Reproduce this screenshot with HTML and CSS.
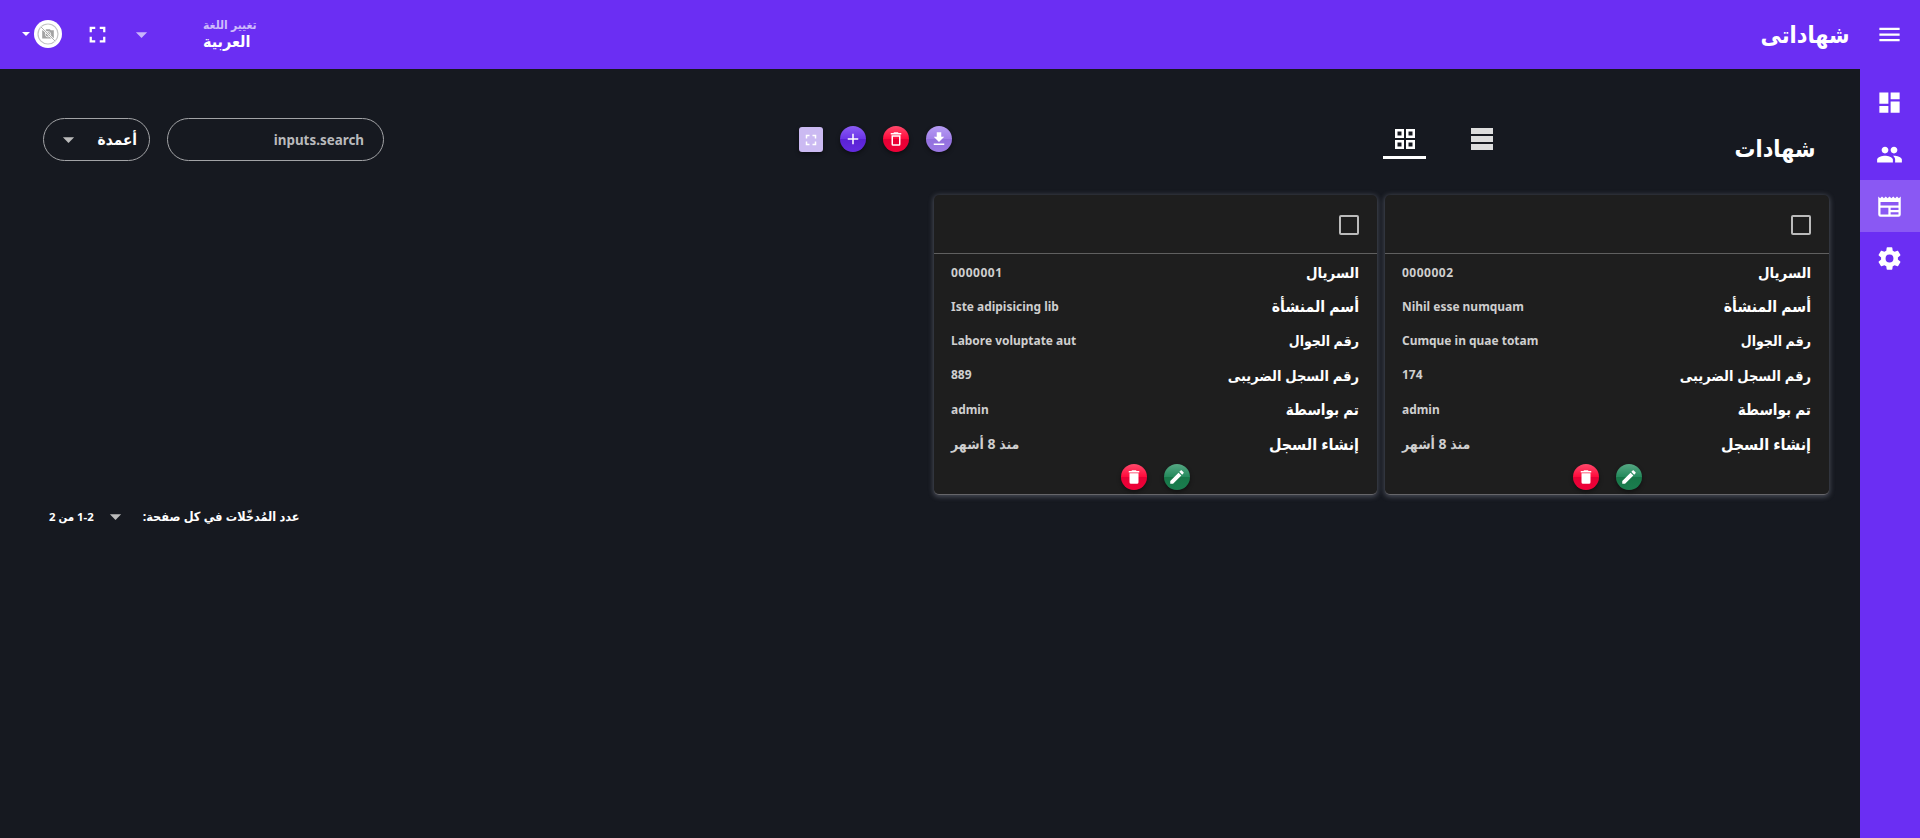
FILE: index.html
```html
<!DOCTYPE html>
<html lang="ar" dir="rtl">
<head>
<meta charset="utf-8">
<title>شهاداتى</title>
<link rel="stylesheet" href="styles.css">
</head>
<body>
<svg class="defs" aria-hidden="true">
  <symbol id="menu" viewBox="0 0 24 24"><path d="M3 6h18v2H3V6m0 5h18v2H3v-2m0 5h18v2H3v-2z"/></symbol>
  <symbol id="dashboard" viewBox="0 0 24 24"><path d="M13 3v6h8V3m-8 18h8V11h-8M3 21h8v-6H3m0-2h8V3H3v10z"/></symbol>
  <symbol id="users" viewBox="0 0 24 24"><path d="M16 11c1.660 0 3-1.340 3-3s-1.340-3-3-3-3 1.340-3 3 1.340 3 3 3m-8 0c1.660 0 3-1.340 3-3S9.660 5 8 5 5 6.340 5 8s1.340 3 3 3m0 2c-2.330 0-7 1.170-7 3.500V19h14v-2.500C15 14.170 10.330 13 8 13m8 0c-.29 0-.62.02-.97.05C16.190 13.890 17 15.020 17 16.500V19h6v-2.500c0-2.330-4.670-3.500-7-3.500z"/></symbol>
  <symbol id="news" viewBox="0 0 24 24"><path d="M20 11H4V8h16m0 7h-7v-2h7m0 6h-7v-2h7m-9 2H4v-6h7m9.330-8.330L18.670 3 17 4.670 15.330 3l-1.660 1.670L12 3l-1.670 1.670L8.670 3 7 4.670 5.330 3 3.670 4.670 2 3v16a2 2 0 0 0 2 2h16a2 2 0 0 0 2-2V3z"/></symbol>
  <symbol id="cog" viewBox="0 0 24 24"><path d="M12 15.500A3.500 3.500 0 0 1 8.500 12 3.500 3.500 0 0 1 12 8.500a3.500 3.500 0 0 1 3.500 3.500 3.500 3.500 0 0 1-3.500 3.500m7.430-2.530c.04-.32.07-.64.07-.97s-.03-.66-.07-1l2.110-1.630c.19-.15.24-.42.12-.64l-2-3.460c-.12-.22-.39-.31-.61-.22l-2.490 1c-.52-.39-1.060-.73-1.690-.98l-.37-2.650A.506.506 0 0 0 14 2h-4c-.25 0-.46.18-.5.42l-.37 2.650c-.63.25-1.170.59-1.690.98l-2.490-1c-.22-.09-.49 0-.61.22l-2 3.460c-.13.22-.07.49.12.64L4.570 11c-.04.34-.07.67-.07 1s.03.65.07.97l-2.110 1.660c-.19.15-.25.42-.12.64l2 3.460c.12.22.39.3.61.22l2.490-1.010c.52.4 1.060.74 1.690.99l.37 2.650c.04.24.25.42.5.42h4c.25 0 .46-.18.5-.42l.37-2.650c.63-.26 1.170-.59 1.690-.99l2.490 1.010c.22.08.49 0 .61-.22l2-3.460c.12-.22.07-.49-.12-.64l-2.110-1.660z"/></symbol>
  <symbol id="fullscreen" viewBox="0 0 24 24"><path d="M5 5h5v2H7v3H5V5m9 0h5v5h-2V7h-3V5m3 9h2v5h-5v-2h3v-3m-7 3v2H5v-5h2v3h3z"/></symbol>
  <symbol id="caret" viewBox="0 0 24 24"><path d="M7 10l5 5 5-5H7z"/></symbol>
  <symbol id="plus" viewBox="0 0 24 24"><path d="M19 13h-6v6h-2v-6H5v-2h6V5h2v6h6v2z"/></symbol>
  <symbol id="trash-o" viewBox="0 0 24 24"><path d="M6 19a2 2 0 0 0 2 2h8a2 2 0 0 0 2-2V7H6v12M8 9h8v10H8V9m7.500-5l-1-1h-5l-1 1H5v2h14V4h-3.500z"/></symbol>
  <symbol id="trash" viewBox="0 0 24 24"><path d="M19 4h-3.500l-1-1h-5l-1 1H5v2h14M6 19a2 2 0 0 0 2 2h8a2 2 0 0 0 2-2V7H6v12z"/></symbol>
  <symbol id="download" viewBox="0 0 24 24"><path d="M5 20h14v-2H5m14-9h-4V3H9v6H5l7 7 7-7z"/></symbol>
  <symbol id="pencil" viewBox="0 0 24 24"><path d="M20.710 7.040c.39-.39.39-1.040 0-1.410l-2.340-2.340c-.37-.39-1.020-.39-1.410 0l-1.840 1.830 3.750 3.750M3 17.250V21h3.750L17.810 9.930l-3.750-3.750L3 17.250z"/></symbol>
  <symbol id="grid" viewBox="0 0 20 20"><path fill-rule="evenodd" d="M0 0h9v9H0zm2.500 2.500v4h4v-4zM11 0h9v9h-9zm2.500 2.500v4h4v-4zM0 11h9v9H0zm2.500 2.500v4h4v-4zM11 11h9v9h-9zm2.500 2.500v4h4v-4z"/></symbol>
  <symbol id="rows" viewBox="0 0 22 22"><path d="M0 0h22v6H0zm0 8h22v6H0zm0 8h22v6H0z"/></symbol>
</svg>

<header class="topbar">
  <div class="brand">
    <svg class="icon"><use href="#menu"/></svg>
    <h1 class="brand-title">شهاداتى</h1>
  </div>
  <div class="top-actions">
    <div class="language">
      <div class="language-text">
        <span class="language-label">تغيير اللغة</span>
        <span class="language-value">العربية</span>
      </div>
      <svg class="icon caret"><use href="#caret"/></svg>
    </div>
    <svg class="icon full"><use href="#fullscreen"/></svg>
    <div class="profile">
      <svg class="avatar" viewBox="0 0 28 28">
        <circle cx="14" cy="14" r="14" fill="#fff"/>
        <circle cx="14" cy="14" r="10" fill="none" stroke="#c4c4c4" stroke-width="1.200"/>
        <path d="M8.200 10.300h3l1-1h3.600l1 1h3v8.200H8.200z" fill="#a2a2a2"/>
        <circle cx="14" cy="14.300" r="2.700" fill="#999" stroke="#eee" stroke-width="1"/>
        <path d="M7 7l14 14" stroke="#fff" stroke-width="2"/>
        <path d="M7 7l14 14" stroke="#b0b0b0" stroke-width="1"/>
      </svg>
      <i class="mini-caret"></i>
    </div>
  </div>
</header>

<div class="shell">
  <nav class="sidebar">
    <a class="nav-item"><svg class="icon"><use href="#dashboard"/></svg></a>
    <a class="nav-item"><svg class="icon"><use href="#users"/></svg></a>
    <a class="nav-item active"><svg class="icon"><use href="#news"/></svg></a>
    <a class="nav-item"><svg class="icon"><use href="#cog"/></svg></a>
  </nav>
  <main class="content">
    <section class="toolbar">
      <h2 class="page-title">شهادات</h2>
      <div class="tabs">
        <span class="tab"><svg class="rows-icon"><use href="#rows"/></svg></span>
        <span class="tab selected"><svg class="grid-icon"><use href="#grid"/></svg></span>
      </div>
      <div class="tools">
        <span class="btn lilac"><svg><use href="#download"/></svg></span>
        <span class="btn red"><svg><use href="#trash-o"/></svg></span>
        <span class="btn violet"><svg><use href="#plus"/></svg></span>
        <span class="btn square"><svg><use href="#fullscreen"/></svg></span>
      </div>
      <div class="filters">
        <div class="field search"><span>inputs.search</span></div>
        <div class="field columns"><span>أعمدة</span><svg class="icon caret"><use href="#caret"/></svg></div>
      </div>
    </section>

    <section class="cards">
      <article class="card">
        <div class="card-head"><i class="checkbox"></i></div>
        <dl class="rows">
          <div class="row serial"><dt>السريال</dt><dd>0000002</dd></div>
          <div class="row facility"><dt>أسم المنشأة</dt><dd class="latin">Nihil esse numquam</dd></div>
          <div class="row phone"><dt>رقم الجوال</dt><dd class="latin">Cumque in quae totam</dd></div>
          <div class="row tax"><dt>رقم السجل الضريبى</dt><dd>174</dd></div>
          <div class="row author"><dt>تم بواسطة</dt><dd class="latin">admin</dd></div>
          <div class="row created"><dt>إنشاء السجل</dt><dd>منذ 8 أشهر</dd></div>
        </dl>
        <div class="card-actions">
          <span class="btn green"><svg><use href="#pencil"/></svg></span>
          <span class="btn red"><svg><use href="#trash"/></svg></span>
        </div>
      </article>
      <article class="card">
        <div class="card-head"><i class="checkbox"></i></div>
        <dl class="rows">
          <div class="row serial"><dt>السريال</dt><dd>0000001</dd></div>
          <div class="row facility"><dt>أسم المنشأة</dt><dd class="latin">Iste adipisicing lib</dd></div>
          <div class="row phone"><dt>رقم الجوال</dt><dd class="latin">Labore voluptate aut</dd></div>
          <div class="row tax"><dt>رقم السجل الضريبى</dt><dd>889</dd></div>
          <div class="row author"><dt>تم بواسطة</dt><dd class="latin">admin</dd></div>
          <div class="row created"><dt>إنشاء السجل</dt><dd>منذ 8 أشهر</dd></div>
        </dl>
        <div class="card-actions">
          <span class="btn green"><svg><use href="#pencil"/></svg></span>
          <span class="btn red"><svg><use href="#trash"/></svg></span>
        </div>
      </article>
    </section>

    <footer class="pager">
      <span class="pager-label">عدد المُدخّلات في كل صفحة:</span>
      <svg class="icon caret"><use href="#caret"/></svg>
      <span class="pager-range">1-2 من 2</span>
    </footer>
  </main>
</div>
</body>
</html>
```
FILE: styles.css
```css
* { box-sizing: border-box; margin: 0; padding: 0; }
body {
  height: 838px;
  overflow: hidden;
  display: flex;
  flex-direction: column;
  background: #161920;
  color: #fff;
  font-family: "Noto Sans", "DejaVu Sans Condensed", "DejaVu Sans", sans-serif;
  font-stretch: condensed;
  font-weight: 700;
}
.defs { position: absolute; width: 0; height: 0; }
svg { fill: currentColor; flex: none; display: block; }
.icon { width: 27px; height: 27px; }
span, h1, h2, dt, dd { white-space: nowrap; }

.topbar {
  height: 69px;
  flex: none;
  display: flex;
  justify-content: space-between;
  align-items: center;
  background: #6b2ef3;
  padding: 0 17.500px 1px 22px;
}
.brand { display: flex; align-items: center; gap: 26px; }
.brand-title { font-size: 23.200px; line-height: 34px; }
.top-actions { display: flex; align-items: center; }
.language { display: flex; align-items: center; justify-content: space-between; width: 129px; }
.language-text { display: flex; flex-direction: column; width: 54px; align-items: flex-end; }
.language-label { font-size: 12px; line-height: 14px; color: #cdbbfb; }
.language-value { font-size: 16px; line-height: 19px; }
.language .caret { color: #c9b5fb; }
.full { margin-right: 17px; }
.profile { display: flex; align-items: center; gap: 4px; margin-right: 22px; }
.avatar { width: 28px; height: 28px; }
.mini-caret { border: 4px solid transparent; border-top-color: #fff; border-bottom: 0; }

.shell { display: flex; flex: 1; min-height: 0; }
.sidebar { width: 60px; background: #6b2ef3; padding-top: 7px; flex: none; }
.nav-item { height: 52px; display: flex; align-items: center; justify-content: center; padding-right: 1px; }
.nav-item.active { background: #8a58f3; }
.content { flex: 1; display: flex; flex-direction: column; }

.toolbar { height: 126px; flex: none; display: flex; align-items: flex-start; padding: 49px 44.500px 0 43px; }
.page-title { width: 201.500px; font-size: 23.200px; line-height: 30px; padding-top: 15px; }
.tabs { display: flex; gap: 34px; margin-right: 111px; }
.tab { width: 43px; height: 41px; display: flex; justify-content: center; align-items: flex-start; border-bottom: 3px solid transparent; color: #ddd; }
.tab.selected { color: #fff; border-bottom-color: #fff; }
.rows-icon { width: 22px; height: 22px; margin-top: 10px; }
.grid-icon { width: 20px; height: 20px; margin-top: 11px; }
.tools { display: flex; gap: 17px; margin-right: 431px; padding-top: 8px; }
.btn { width: 26px; height: 26px; border-radius: 50%; display: flex; align-items: center; justify-content: center; box-shadow: 0 2px 4px rgba(0, 0, 0, .45); }
.btn svg { width: 18px; height: 18px; }
.lilac { background: linear-gradient(#b69cf4, #a17fe8 50%, #9270de 50%, #9b78e4); }
.red { background: linear-gradient(#ff496b, #ff0a3b 50%, #e60034 50%, #f00038); }
.violet { background: linear-gradient(#8b5cf4, #6b34e8 50%, #5a22d4 50%, #642be0); }
.green { background: linear-gradient(#56a884, #248a5c 50%, #177748 50%, #1b7d4f); }
.square { width: 24px; height: 25px; border-radius: 3px; background: #cbbaf2; margin-top: 1px; }
.filters { display: flex; gap: 17px; margin-right: auto; }
.field { height: 43px; border: 1px solid #a2a3a6; border-radius: 22px; display: flex; align-items: center; }
.search { width: 217px; padding-right: 19px; color: #b9babc; font-size: 13.400px; }
.columns { width: 107px; padding: 0 12px 1px 11px; justify-content: space-between; font-size: 15.300px; }
.caret { color: #bbb; }

.cards { display: flex; gap: 8px; padding-right: 31px; }
.card { flex: none; width: 443px; height: 300px; background: #1e1e1e; border-radius: 5px; display: flex; flex-direction: column; border-bottom: 1px solid #66666a; box-shadow: 0 1px 5px 1px rgba(150, 155, 170, .38); }
.card:first-child { width: 444px; }
.card-head { height: 59px; flex: none; border-bottom: 1px solid #606060; padding: 20px 18px 0; }
.checkbox { display: block; width: 20px; height: 20px; border: 2px solid #bbb; border-radius: 2px; }
.rows { padding: 1px 18px 0 17px; }
.row { height: 34.300px; display: flex; justify-content: space-between; align-items: center; }
dt { font-size: 14.800px; line-height: 20px; }
dd { font-size: 12px; color: #cfcfcf; line-height: 18px; }
.latin { direction: ltr; font-size: 11.950px; padding-top: 1px; }
.serial dd { letter-spacing: .5px; direction: ltr; padding-top: 1px; }
.facility dt { font-size: 15.700px; }
.phone dt { font-size: 14px; }
.tax dt { font-size: 14.500px; }
.author dt { font-size: 15.200px; }
.created dt { font-size: 16px; }
.created dd { font-size: 14px; }
.card-actions { display: flex; gap: 17px; justify-content: center; padding-top: 3px; }

.pager { display: flex; align-items: center; padding: 8px 0 0 49px; justify-content: flex-end; font-size: 12.600px; line-height: 26px; }
.pager-label { margin-left: 14px; }
.pager-range { margin-right: 8px; font-size: 11.400px; }
```
